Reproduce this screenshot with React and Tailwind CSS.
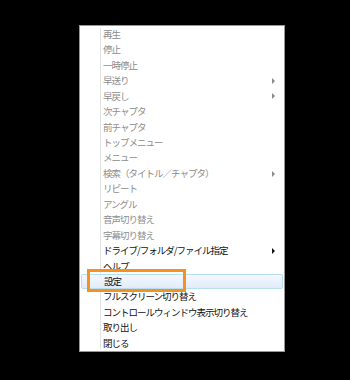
import React from "react";

const items = [
  { t: "再生", d: true },
  { t: "停止", d: true },
  { t: "一時停止", d: true },
  { t: "早送り", d: true, a: true },
  { t: "早戻し", d: true, a: true },
  { t: "次チャプタ", d: true },
  { t: "前チャプタ", d: true },
  { t: "トップメニュー", d: true },
  { t: "メニュー", d: true },
  { t: "検索（タイトル／チャプタ）", d: true, a: true },
  { t: "リピート", d: true },
  { t: "アングル", d: true },
  { t: "音声切り替え", d: true },
  { t: "字幕切り替え", d: true },
  { t: "ドライブ/フォルダ/ファイル指定", a: true },
  { t: "ヘルプ" },
  { t: "設定", h: true },
  { t: "フルスクリーン切り替え" },
  { t: "コントロールウィンドウ表示切り替え" },
  { t: "取り出し" },
  { t: "閉じる" },
];

function Arrow({ d }) {
  return (
    <svg width="3" height="6" viewBox="0 0 3 6" className="ml-auto mr-[8px] shrink-0">
      <path d="M0 0 L3 3 L0 6 Z" fill={d ? "#8a8a8a" : "#111"} />
    </svg>
  );
}

export default function App() {
  return (
    <div className="w-[350px] h-[380px] bg-black overflow-hidden">
      <div className="pt-[25px] pl-[79px]">
        <div
          className="relative w-[206px] h-[327px] bg-white border border-[#979797] pt-[1px] px-[1px]"
          style={{ fontFamily: '"Noto Sans CJK JP", "Noto Sans", sans-serif' }}
        >
          <div className="absolute left-[20px] top-[2px] bottom-[2px] w-[1px] bg-[#e2e3e3]" />
          <div className="absolute left-[21px] top-[2px] bottom-[2px] w-[1px] bg-white" />
          <div className="flex flex-col">
            {items.map((it) => (
              <div
                key={it.t}
                className={
                  "relative h-[15.45px] flex items-center pl-[22px] text-[9.5px] tracking-[-1px] leading-none " +
                  (it.h
                    ? "bg-gradient-to-b from-[#f4f8fe] to-[#e3ebfb] border border-[#b6e0f2] rounded-[2px] pl-[21px] "
                    : "") +
                  (it.d ? "text-[#8d8d8d]" : "text-[#111]")
                }
              >
                <span className="whitespace-nowrap">{it.t}</span>
                {it.a && <Arrow d={it.d} />}
              </div>
            ))}
          </div>
          <div className="absolute left-[7px] top-[243px] w-[99px] h-[23px] border-[3px] border-[#f7901e]" />
        </div>
      </div>
    </div>
  );
}
